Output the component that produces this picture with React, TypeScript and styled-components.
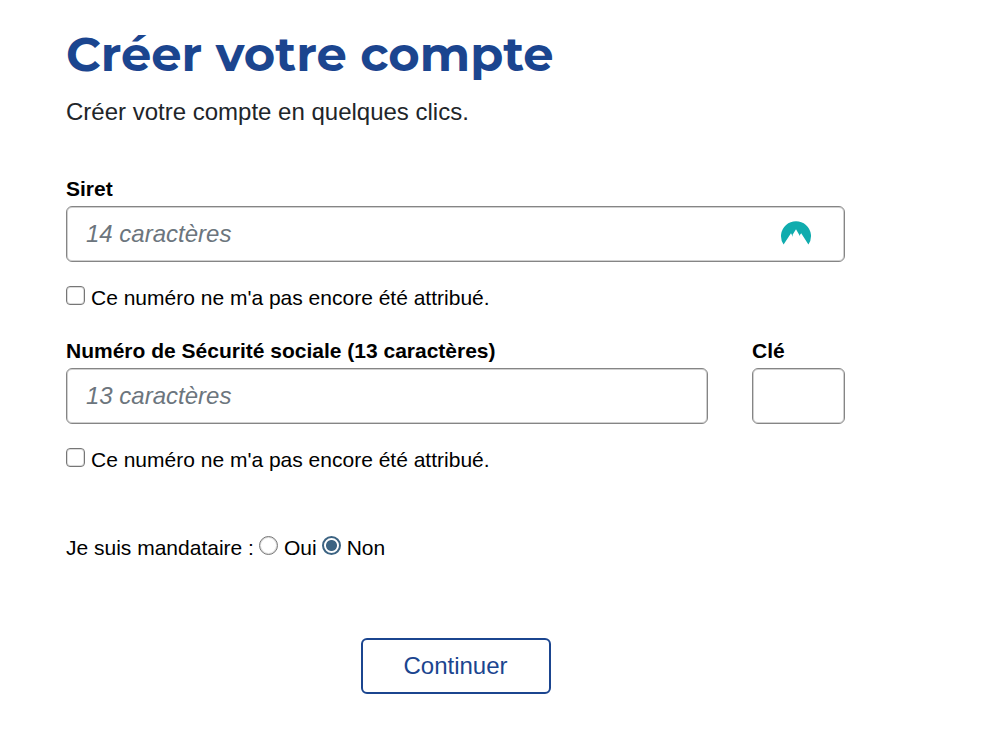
import React from "react";
import styled, { createGlobalStyle } from "styled-components";

const GlobalStyle = createGlobalStyle`
  *, *::before, *::after { box-sizing: border-box; }
  body {
    margin: 0;
    background: #fff;
    color: #000;
    font-family: "Liberation Sans", Arial, sans-serif;
    font-size: 21px;
    line-height: 24px;
  }
`;

const Page = styled.main`
  padding: 26px 155px 52px 66px;
`;

const Title = styled.h1`
  margin: 0;
  color: #1b458f;
  font-family: Montserrat, Inter, sans-serif;
  font-size: 48px;
  font-weight: 700;
  line-height: 56px;
`;

const Intro = styled.p`
  margin: 12px 0 47px;
  color: #212529;
  font-size: 24px;
  line-height: 36px;
`;

const Form = styled.form`
  display: flex;
  flex-direction: column;
`;

const Group = styled.div`
  display: flex;
  flex-direction: column;
  gap: 24px;
  margin-bottom: 29px;
`;

const Row = styled.div`
  display: grid;
  grid-template-columns: 1fr 93px;
  column-gap: 44px;
`;

const Field = styled.div`
  display: flex;
  flex-direction: column;
  gap: 5px;
  min-width: 0;
`;

const Label = styled.label`
  font-weight: 700;
`;

const InputWrap = styled.div`
  position: relative;
  display: flex;
`;

const Input = styled.input`
  width: 100%;
  min-width: 0;
  height: 56px;
  padding: 0 19px;
  border: 1px solid #858585;
  border-radius: 6px;
  box-shadow: inset 0 0 0 1px #d0d0d0;
  background: #fff;
  color: #212529;
  font-family: inherit;
  font-size: 24px;
  &::placeholder {
    color: #6c757d;
    font-style: italic;
    opacity: 1;
  }
`;

const Mountain = styled.svg`
  position: absolute;
  top: 14px;
  right: 33px;
  width: 32px;
  height: 26px;
`;

const Choice = styled.label`
  display: flex;
  align-items: flex-start;
  gap: 6px;
`;

const Tick = styled.input`
  flex: none;
  appearance: none;
  width: 19px;
  height: 19px;
  margin: 0;
  border: 1px solid #767676;
  border-radius: ${(p) => (p.type === "radio" ? "50%" : "4px")};
  box-shadow: inset 0 0 0 1px #dcdcdc;
  background: #fff;
  &[type="checkbox"]:checked {
    background: #3c6382;
  }
  &[type="radio"]:checked {
    border: 2px solid #3c6382;
    box-shadow: none;
    background: radial-gradient(circle, #3c6382 5px, #fff 6px);
  }
`;

const Mandate = styled.fieldset`
  display: flex;
  gap: 5px;
  margin: 35px 0 78px;
  padding: 0;
  border: 0;
`;

const Submit = styled.button`
  align-self: center;
  width: 190px;
  height: 56px;
  border: 2px solid #1b458f;
  border-radius: 6px;
  background: #fff;
  color: #1b458f;
  font-family: inherit;
  font-size: 24px;
  cursor: pointer;
`;

function Unassigned({ name }: { name: string }) {
  return (
    <Choice>
      <Tick type="checkbox" name={name} />
      <span>Ce numéro ne m'a pas encore été attribué.</span>
    </Choice>
  );
}

export default function App() {
  return (
    <>
      <GlobalStyle />
      <Page>
        <Title>Créer votre compte</Title>
        <Intro>Créer votre compte en quelques clics.</Intro>
        <Form onSubmit={(e) => e.preventDefault()}>
          <Group>
            <Field>
              <Label htmlFor="siret">Siret</Label>
              <InputWrap>
                <Input id="siret" placeholder="14 caractères" maxLength={14} />
                <Mountain viewBox="0 0 32 26" aria-hidden="true">
                  <path
                    fill="#10acae"
                    d="M3.6 24.6A15 15 0 1 1 28.4 24.6L21.2 13.2L19.9 15L20.2 16.4L16 9.2L12.6 14.8L13 17L11 13.2Z"
                  />
                </Mountain>
              </InputWrap>
            </Field>
            <Unassigned name="siret-absent" />
          </Group>
          <Group>
            <Row>
              <Field>
                <Label htmlFor="nir">Numéro de Sécurité sociale (13 caractères)</Label>
                <Input id="nir" placeholder="13 caractères" maxLength={13} />
              </Field>
              <Field>
                <Label htmlFor="cle">Clé</Label>
                <Input id="cle" maxLength={2} />
              </Field>
            </Row>
            <Unassigned name="nir-absent" />
          </Group>
          <Mandate aria-labelledby="mandate-label">
            <span id="mandate-label">Je suis mandataire :</span>
            <Choice>
              <Tick type="radio" name="mandataire" value="oui" />
              <span>Oui</span>
            </Choice>
            <Choice>
              <Tick type="radio" name="mandataire" value="non" defaultChecked />
              <span>Non</span>
            </Choice>
          </Mandate>
          <Submit type="submit">Continuer</Submit>
        </Form>
      </Page>
    </>
  );
}
